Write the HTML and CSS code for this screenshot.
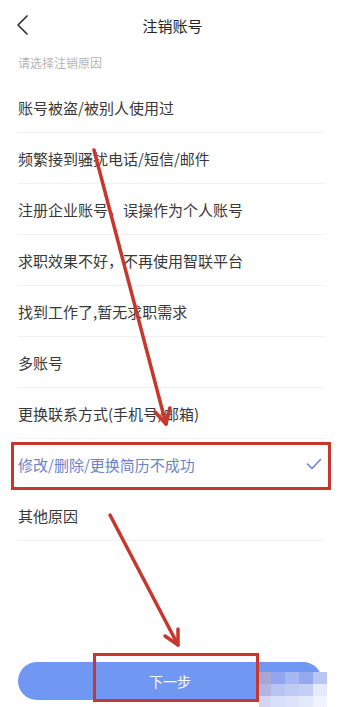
FILE: index.html
```html
<!DOCTYPE html>
<html lang="zh-CN">
<head>
  <meta charset="UTF-8">
  <title>注销账号</title>
  <link rel="stylesheet" href="styles.css">
</head>
<body>

<div class="page">
  <div class="header">
    <span class="back">
      <svg width="14" height="22" viewBox="0 0 14 22">
        <polyline points="11,2 2,11 11,20" fill="none" stroke="#333" stroke-width="1.7" stroke-linecap="round" stroke-linejoin="round"/>
      </svg>
    </span>
    <h1>注销账号</h1>
  </div>

  <div class="hint">请选择注销原因</div>

  <ul class="reasons">
    <li>账号被盗/被别人使用过</li>
    <li>频繁接到骚扰电话/短信/邮件</li>
    <li>注册企业账号，误操作为个人账号</li>
    <li>求职效果不好，不再使用智联平台</li>
    <li>找到工作了,暂无求职需求</li>
    <li>多账号</li>
    <li>更换联系方式(手机号/邮箱)</li>
    <li class="selected">
      修改/删除/更换简历不成功
      <svg class="check" width="16" height="12" viewBox="0 0 16 12">
        <polyline points="1.5,6 6,10.5 14.5,1.5" fill="none" stroke="#6b85d8" stroke-width="1.6" stroke-linecap="round" stroke-linejoin="round"/>
      </svg>
    </li>
    <li>其他原因</li>
  </ul>

  <div class="footer">
    <button class="next">下一步</button>
  </div>

  <!-- annotations drawn on top of the screenshot -->
  <svg class="marks" width="345" height="707" viewBox="0 0 345 707">
    <g fill="none" stroke="#c8372d" stroke-width="3.5" stroke-linecap="round" stroke-linejoin="round">
      <line x1="94" y1="150" x2="166" y2="424"/>
      <polyline points="155,412 166,424 170,408"/>
      <line x1="110" y1="515" x2="178" y2="645"/>
      <polyline points="165,636 178,645 178,629"/>
    </g>
    <g fill="none" stroke="#c8372d" stroke-width="3">
      <rect x="12.5" y="443.5" width="317" height="45"/>
      <rect x="94.5" y="654.5" width="163" height="46"/>
    </g>
    <g class="mosaic">
      <rect x="259" y="672" width="12" height="12" fill="#a9a6d6"/>
      <rect x="271" y="672" width="14" height="12" fill="#92a5ee"/>
      <rect x="285" y="672" width="14" height="12" fill="#a7b7f2"/>
      <rect x="299" y="672" width="14" height="12" fill="#94a8ef"/>
      <rect x="313" y="672" width="14" height="12" fill="#b9c6f4"/>
      <rect x="259" y="684" width="12" height="12" fill="#b3b4e2"/>
      <rect x="271" y="684" width="14" height="12" fill="#b8c5f4"/>
      <rect x="285" y="684" width="14" height="12" fill="#bfcbf5"/>
      <rect x="299" y="684" width="14" height="12" fill="#c4cff6"/>
      <rect x="313" y="684" width="14" height="12" fill="#e6ebfb"/>
      <rect x="259" y="696" width="12" height="11" fill="#d4d6f0"/>
      <rect x="271" y="696" width="14" height="11" fill="#d9e0f9"/>
      <rect x="285" y="696" width="14" height="11" fill="#dde3f9"/>
      <rect x="299" y="696" width="14" height="11" fill="#e4e9fb"/>
      <rect x="313" y="696" width="14" height="11" fill="#f2f4fd"/>
    </g>
  </svg>
</div>

</body>
</html>
```

FILE: styles.css
```css
body {
  margin: 0;
  background-color: #fff;
  font-family: "Noto Sans CJK SC", "Noto Sans", sans-serif;
  color: #333;
}

.page {
  position: relative;
  width: 345px;
  min-height: 707px;
  display: flex;
  flex-direction: column;
  overflow: hidden;
}

.header {
  height: 50px;
  display: flex;
  align-items: center;
  justify-content: center;
  position: relative;
}

.header h1 {
  margin: 0;
  font-size: 15px;
  font-weight: normal;
  color: #222;
}

.back {
  position: absolute;
  left: 16px;
  top: 14px;
  display: flex;
}

.hint {
  padding: 4px 18px 11px;
  font-size: 12px;
  line-height: 17px;
  color: #b4b4b4;
}

.reasons {
  list-style: none;
  margin: 0;
  padding: 0 20px 0 18px;
}

.reasons li {
  height: 50px;
  display: flex;
  align-items: center;
  justify-content: space-between;
  border-bottom: 1px solid #f1f1f1;
  font-size: 15px;
  color: #383838;
}

.reasons li.selected {
  color: #6b83c8;
}

.check {
  margin-right: 3px;
}

.footer {
  margin-top: auto;
  padding: 0 23px 7px 18px;
}

.next {
  width: 100%;
  height: 38px;
  border: none;
  border-radius: 19px;
  background-color: #7098f3;
  color: #fff;
  font-family: inherit;
  font-size: 14px;
}

.marks {
  position: absolute;
  top: 0;
  left: 0;
  pointer-events: none;
}
```
